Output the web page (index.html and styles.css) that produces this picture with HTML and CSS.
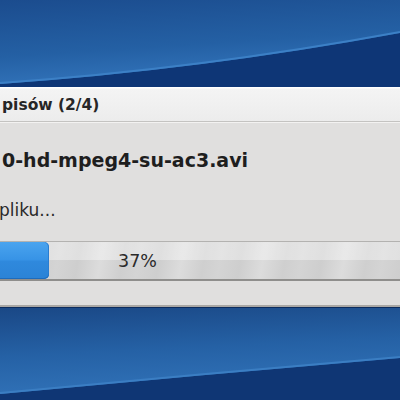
FILE: index.html
```html
<!DOCTYPE html>
<html lang="pl">
<head>
    <meta charset="UTF-8">
    <title>Kopiowanie zapisów</title>
    <link rel="stylesheet" href="styles.css">
</head>
<body>
    <div class="desktop">
        <div class="wall wall-top">
            <svg width="400" height="87" viewBox="0 0 400 87">
                <defs>
                    <linearGradient id="skyTop" x1="0" y1="0" x2="0.3" y2="1">
                        <stop offset="0" stop-color="#1b4c8e"/>
                        <stop offset="0.6" stop-color="#2460a4"/>
                        <stop offset="1" stop-color="#3476bd"/>
                    </linearGradient>
                </defs>
                <rect width="400" height="87" fill="url(#skyTop)"/>
                <path d="M0 84 Q200 70 400 33 L400 87 L0 87 Z" fill="#0e3676"/>
                <path d="M0 83 Q200 69 400 32" stroke="#3c80c6" stroke-width="2" fill="none"/>
            </svg>
        </div>
        <div class="dialog">
            <div class="titlebar">
                <span class="title">pisów (2/4)</span>
            </div>
            <div class="content">
                <div class="filename">0-hd-mpeg4-su-ac3.avi</div>
                <div class="status">pliku...</div>
                <div class="progress">
                    <div class="chunk" style="width: 49px"></div>
                    <span class="percent">37%</span>
                </div>
            </div>
        </div>
        <div class="wall wall-bottom">
            <svg width="400" height="93" viewBox="0 0 400 93">
                <defs>
                    <linearGradient id="skyBottom" x1="0" y1="0" x2="0.2" y2="1">
                        <stop offset="0" stop-color="#1a4886"/>
                        <stop offset="0.5" stop-color="#2561a5"/>
                        <stop offset="1" stop-color="#3274ba"/>
                    </linearGradient>
                </defs>
                <rect width="400" height="93" fill="url(#skyBottom)"/>
                <path d="M0 86 Q200 67 400 50 L400 93 L0 93 Z" fill="#0f3674"/>
                <path d="M0 85 Q200 66 400 49" stroke="#3b7ec3" stroke-width="2" fill="none"/>
            </svg>
        </div>
    </div>
</body>
</html>
```

FILE: styles.css
```css
* {
    margin: 0;
    padding: 0;
    box-sizing: border-box;
}
body {
    font-family: "DejaVu Sans", Verdana, sans-serif;
    background-color: #1b4b8b;
}
.desktop {
    width: 400px;
    height: 400px;
    overflow: hidden;
    display: flex;
    flex-direction: column;
}
.wall svg {
    display: block;
}
.wall-top {
    height: 87px;
    flex-shrink: 0;
}
.wall-bottom {
    height: 93px;
    flex-shrink: 0;
    border-top: 1px solid #0c2c5e;
}
.dialog {
    flex-shrink: 0;
    background-color: #e0dfde;
    border-bottom: 2px solid #a9a7a4;
}
.titlebar {
    height: 35px;
    padding-left: 2px;
    display: flex;
    align-items: center;
    background: linear-gradient(#ffffff 0, #ffffff 1px, #f4f4f4 2px, #ececec 100%);
    border-bottom: 1px solid #c4c3c1;
    box-shadow: 0 1px 0 #f3f2f1;
}
.title {
    font-size: 15.5px;
    font-weight: bold;
    color: #262626;
    padding-top: 2px;
}
.content {
    padding-top: 26px;
    padding-bottom: 24px;
}
.filename {
    font-size: 19px;
    font-weight: bold;
    color: #1e1e1e;
    padding-left: 2px;
    line-height: 24px;
}
.status {
    font-size: 17px;
    color: #2a2a2a;
    margin-left: -1px;
    margin-top: 26px;
    line-height: 24px;
}
.progress {
    margin-top: 19px;
    height: 40px;
    display: flex;
    align-items: center;
    border-top: 1px solid #b3b2b0;
    border-bottom: 2px solid #8f8e8c;
    background:
        linear-gradient(rgba(255, 255, 255, 0.3) 0, rgba(255, 255, 255, 0.3) 50%, rgba(0, 0, 0, 0.02) 50%, rgba(0, 0, 0, 0.02) 100%),
        repeating-linear-gradient(100deg, #d2d2d2 0, #e0e0e0 22px, #d3d3d3 44px, #d8d8d8 60px, #d2d2d2 80px);
}
.chunk {
    align-self: stretch;
    border-radius: 0 5px 5px 0;
    background: linear-gradient(#4aa4ef 0, #3793e6 48%, #2f89dd 52%, #2b83d6 100%);
    box-shadow: inset 0 -1px 0 #1e6cbc, inset -1px 0 0 #2a7dd0;
}
.percent {
    margin-left: 69px;
    font-size: 17.5px;
    color: #2b2b2b;
}
```
